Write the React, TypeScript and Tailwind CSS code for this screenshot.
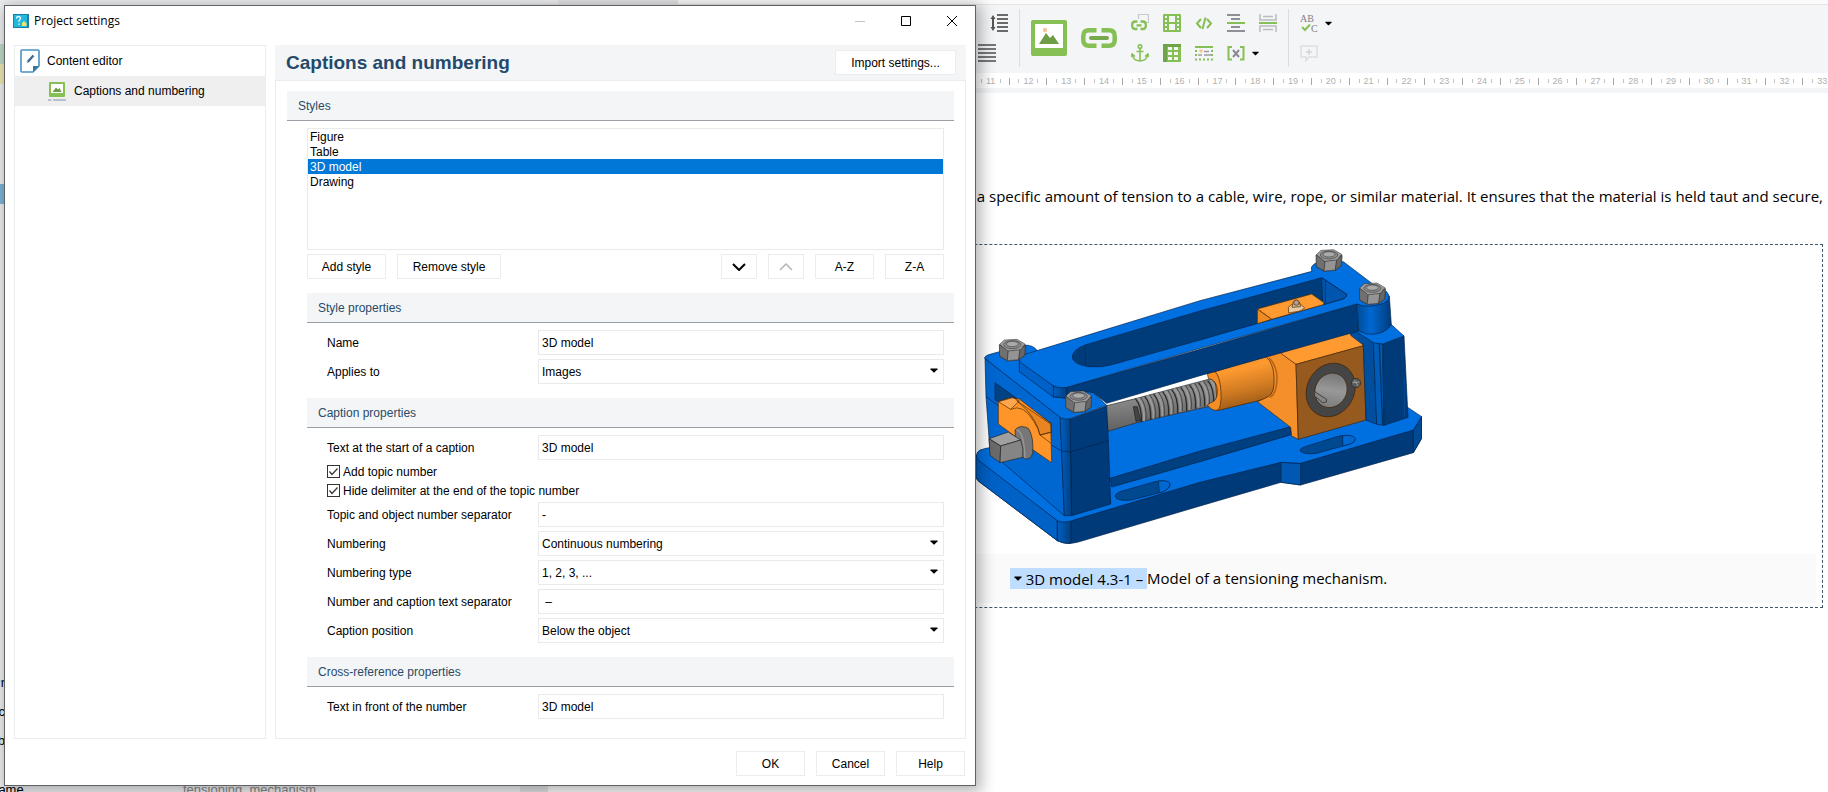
import { useState } from "react"
import type { ReactNode } from "react"

const styles = ["Figure", "Table", "3D model", "Drawing"]

function Caret({ className = "" }: { className?: string }) {
  return (
    <svg viewBox="0 0 8 5" className={`w-2 h-[5px] ${className}`} fill="currentColor">
      <path d="M0.500 0.500h7v0.800L4.400 4.500h-0.800L0.500 1.300z" />
    </svg>
  )
}

function Nut({ x, y }: { x: number; y: number }) {
  return (
    <g transform={`translate(${x} ${y})`} stroke="#2c2c2c" strokeWidth="1.5" strokeLinejoin="round">
      <path d="M-38 -16 L-38 14 L-35 22 L-14 33 L18 30 L37 17 L39 -15 Z" fill="#7a7a7a" />
      <path d="M-39 -16 L-38 18 L-15 31 L-12 2 Z" fill="#707070" />
      <path d="M-12 2 L-15 32 L19 29 L23 -2 Z" fill="#949494" />
      <path d="M23 -2 L19 29 L37 16 L39 -15 Z" fill="#666666" />
      <path d="M-38 -17 L-24 -30 L14 -32 L38 -18 L24 -1 L-13 3 Z" fill="#9e9e9e" />
      <ellipse cx="0" cy="-16" rx="26" ry="12" fill="#8c8c8c" />
      <ellipse cx="0" cy="-18" rx="18" ry="8" fill="#aaaaaa" />
    </g>
  )
}

function TensioningMechanism() {
  const threads = [508, 536, 563, 590, 617, 644, 671, 698, 725]
  return (
    <svg viewBox="18 45 1338 927" className="block w-[446px] h-[309px]" role="img" aria-label="Model of a tensioning mechanism">
      <defs>
        <linearGradient id="shaft" x1="0" y1="0" x2="0.25" y2="1">
          <stop offset="0" stopColor="#4c4c4c" />
          <stop offset="0.4" stopColor="#8c8c8c" />
          <stop offset="1" stopColor="#5c5c5c" />
        </linearGradient>
        <linearGradient id="sleeve" x1="0" y1="0" x2="0.25" y2="1">
          <stop offset="0" stopColor="#d87a18" />
          <stop offset="0.35" stopColor="#ff9a30" />
          <stop offset="0.7" stopColor="#d07b22" />
          <stop offset="1" stopColor="#9c5a16" />
        </linearGradient>
        <linearGradient id="post" x1="0" y1="0" x2="1" y2="0">
          <stop offset="0" stopColor="#004a94" />
          <stop offset="0.4" stopColor="#0068d2" />
          <stop offset="1" stopColor="#003c7a" />
        </linearGradient>
        <linearGradient id="corner" x1="0" y1="0" x2="1" y2="0">
          <stop offset="0" stopColor="#0060c2" />
          <stop offset="1" stopColor="#003f80" />
        </linearGradient>
        <linearGradient id="bore" x1="0" y1="0" x2="0.3" y2="1">
          <stop offset="0" stopColor="#6e6e6e" />
          <stop offset="0.6" stopColor="#989898" />
          <stop offset="1" stopColor="#808080" />
        </linearGradient>
      </defs>

      {/* base plate */}
      <g stroke="#00234a" strokeWidth="2" strokeLinejoin="round">
        <path d="M18 680 L18 742 Q20 750 30 757 L262 932 Q290 946 325 936 L690 828 L933 757 L992 765 L1330 668 L1355 625 L1355 560 L1100 600 L300 800 Z" fill="#003a78" />
        <path d="M18 675 L18 742 Q20 750 30 757 L262 932 L262 872 Z" fill="#0061c6" />
        <path d="M262 870 L262 932 Q280 942 303 940 L303 872 Z" fill="url(#corner)" />
        <path d="M933 697 L992 700 L992 765 L933 757 Z" fill="#0058b2" />
        <path d="M1330 600 L1355 560 L1355 625 L1330 668 Z" fill="#004a94" />
        <path d="M48 655 L414 590 L880 490 L1200 545 L1310 530 L1355 560 L1330 600 L992 700 L933 697 L690 757 L318 868 Q285 882 262 872 L24 690 Q12 672 30 660 Z" fill="#006fe0" />
        <path d="M420 745 L690 663 L962 590 L964 614 L690 695 L425 771 Z" fill="#003f80" />
        <path d="M450 785 L555 755 Q590 748 600 762 Q600 775 580 785 L485 810 Q445 815 435 800 Q434 792 450 785 Z" fill="#004890" />
        <path d="M565 753 Q600 750 600 762 Q600 775 580 785 L568 788 Z" fill="#0068d2" />
        <path d="M1005 650 L1100 620 Q1140 610 1155 625 Q1158 635 1140 642 L1040 670 Q1000 675 990 662 Q989 655 1005 650 Z" fill="#004890" />
        <path d="M1118 617 Q1150 613 1155 625 Q1158 635 1140 642 L1118 648 Z" fill="#0068d2" />
      </g>

      {/* threaded shaft */}
      <path d="M406 528 L500 505 L745 440 L750 522 L500 578 L414 604 Z" fill="url(#shaft)" stroke="#2a2a2a" strokeWidth="2" />
      {threads.map((x) => (
        <g key={x} transform={`translate(${x} ${538 - (x - 508) * 0.25})`} fill="none">
          <path d="M-12 -32 Q8 -10 6 39" stroke="#2b2b2b" strokeWidth="4" />
          <path d="M-4 -35 Q17 -10 14 35" stroke="#9a9a9a" strokeWidth="6" />
          <path d="M3 -37 Q24 -10 20 33" stroke="#474747" strokeWidth="3" />
        </g>
      ))}
      <path d="M490 530 L502 530 L512 572 L498 574 Z" fill="#444" stroke="#1f1f1f" strokeWidth="2" />

      {/* sliding block and sleeve */}
      <g stroke="#3f2205" strokeWidth="2" strokeLinejoin="round">
        <path d="M735 425 L895 375 L935 365 L915 500 L742 542 Z" fill="url(#sleeve)" />
        <path d="M735 425 L712 430 L715 445 Q740 450 742 480 Q743 515 722 518 L712 525 Q728 545 742 540 Q755 535 753 485 Q750 438 735 425 Z" fill="#f58c24" />
        <path d="M888 380 L935 365 L978 403 L985 628 L965 618 L962 592 L862 515 L895 500 Q915 490 912 440 Q910 400 888 380 Z" fill="#f58f2a" />
        <path d="M898 384 Q922 410 921 450 Q919 492 900 502" fill="none" stroke="#b56515" strokeWidth="5" />
        <path d="M935 372 L930 355 L1140 295 L1182 347 L978 403 Z" fill="#ff9a30" />
        <path d="M978 403 L1180 347 L1188 570 L985 628 Z" fill="#965a1e" />
        <ellipse cx="1082" cy="480" rx="71" ry="83" transform="rotate(28 1082 480)" fill="#454545" />
        <ellipse cx="1083" cy="481" rx="47" ry="53" transform="rotate(28 1083 481)" fill="url(#bore)" />
        <path d="M1034 485 L1070 508 L1069 516 L1058 518 L1036 500" fill="#858585" stroke="#222" />
        <circle cx="1158" cy="459" r="14" fill="#5c5c5c" stroke="#222" />
        <path d="M1152 450 L1165 468 M1148 458 L1168 456" stroke="#bbb" />
      </g>

      {/* right end block */}
      <g stroke="#00234a" strokeWidth="2" strokeLinejoin="round">
        <path d="M1140 295 L1210 325 L1220 583 L1188 570 L1180 345 L1142 316 Z" fill="#004e9e" />
        <path d="M1210 335 L1238 342 L1242 586 L1220 583 Z" fill="#005cb8" />
        <path d="M1238 342 L1302 318 L1314 562 L1242 586 Z" fill="#003a78" />
        <path d="M1228 342 L1238 586" stroke="#003468" strokeWidth="4" />
        <path d="M1155 302 L1262 282 L1302 318 L1238 342 L1210 338 Z" fill="#006fe0" />
        <path d="M1303 440 L1303 560" stroke="#00509f" strokeWidth="3" />
      </g>

      {/* left end block */}
      <g stroke="#00234a" strokeWidth="2" strokeLinejoin="round">
        <path d="M45 385 L48 500 L60 665 L283 857 L272 562 Z" fill="#0066d0" />
        <path d="M300 567 L410 528 L415 632 L422 822 L305 857 Z" fill="#003a78" />
        <path d="M270 560 L300 567 L305 857 L283 857 Z" fill="url(#corner)" />
        <path d="M44 385 Q43 378 60 373 L160 345 Q190 345 200 360 L260 470 L370 488 L410 526 L300 566 Q280 570 268 560 Z" fill="#006fe0" />
        <path d="M48 500 L86 528 M245 645 L275 663 L300 666 L415 632" fill="none" />
        <path d="M75 458 L243 580 L243 612 L150 545 L75 510 Z" fill="#004385" />
      </g>
      <g stroke="#4a2806" strokeWidth="2" strokeLinejoin="round">
        <path d="M85 515 L120 503 L148 507 L242 580 L245 698 L190 660 L85 582 Z" fill="#ff9428" />
        <path d="M85 515 L128 503 L148 513 L122 538 Z" fill="#ffa64c" />
        <path d="M140 512 L242 582 L243 607 L210 615 Q200 570 165 535 Z" fill="#e88520" />
        <path d="M122 538 Q160 520 192 575 Q205 595 210 615 L243 640 M210 615 L243 606" fill="none" />
      </g>
      <g stroke="#232323" strokeWidth="2" strokeLinejoin="round">
        <path d="M135 600 Q150 582 175 595 Q192 620 188 670 Q182 690 165 686 L140 670 Z" fill="#777" />
        <path d="M140 600 Q162 605 165 685" fill="none" stroke="#999" strokeWidth="4" />
        <path d="M57 626 L115 606 L152 630 L92 648 Z" fill="#a0a0a0" />
        <path d="M57 626 L92 648 L90 698 L60 676 Z" fill="#6a6a6a" />
        <path d="M92 648 L152 630 Q162 655 158 682 L90 698 Z" fill="#858585" />
      </g>

      {/* top frame */}
      <g stroke="#00234a" strokeWidth="2" strokeLinejoin="round">
        <path d="M250 468 L290 472 L690 358 L1160 222 L1166 303 L690 437 L410 520 L370 488 L330 482 L290 505 L250 500 Z" fill="#003c7c" />
        <path d="M148 385 L252 468 L252 502 L148 425 Z" fill="#0062c8" />
        <path d="M250 468 L290 474 L290 505 L250 500 Z" fill="url(#corner)" />
        <path d="M1160 222 L1258 198 L1264 285 Q1240 318 1190 312 L1166 303 Z" fill="url(#post)" />
        <path d="M155 376 L690 212 L1026 124 Q1018 108 1040 98 L1120 95 L1212 165 L1250 185 Q1268 205 1240 220 Q1195 236 1160 222 L690 355 L290 472 Q262 476 248 466 L150 396 Q144 384 155 376 Z" fill="#006fe0" />
        <path d="M345 345 L690 243 L1055 143 L1130 193 Q1130 204 1115 208 L690 330 L430 403 Q395 414 355 410 Q305 402 307 378 Q312 357 345 345 Z" fill="#003c7a" />
        <path d="M1055 143 L1130 193 Q1130 204 1115 208 L1058 224 Z" fill="#0056ae" />
        <path d="M345 345 L347 408 M1066 150 L1066 218" fill="none" stroke="#002a56" />
      </g>
      <g stroke="#4a2806" strokeWidth="2" strokeLinejoin="round">
        <path d="M862 237 L1025 192 L1062 218 L1060 224 L905 268 Z" fill="#ff9a30" />
        <path d="M862 237 L905 268 L862 281 Z" fill="#f08a24" />
        <path d="M955 232 L966 223 L992 223 L1004 234 L990 243 L956 249 Z" fill="#e8c9a0" />
        <path d="M966 232 L970 216 L978 210 L988 216 L992 230 Z" fill="#d8b590" />
        <circle cx="979" cy="218" r="8" fill="#b0a090" />
      </g>

      <Nut x={127} y={360} />
      <Nut x={326} y={515} />
      <Nut x={1077} y={91} />
      <Nut x={1207} y={191} />
    </svg>
  )
}

function Ruler() {
  const marks = Array.from({ length: 35 }, (_, i) => i)
  return (
    <svg className="block w-full h-[15px] bg-white" aria-hidden="true">
      {marks.map((n) => {
        const x = 26.8 + n * 37.8
        return (
          <g key={n}>
            <text x={x} y="11" textAnchor="middle" fontSize="9" fill="#b0b0b0">
              {n}
            </text>
            <path d={`M${Math.round(x - 10)}.5 6v4M${Math.round(x + 9)}.5 6v4`} stroke="#c4c4c4" />
            <path d={`M${Math.round(x + 18)}.5 5v7`} stroke="#a8a8a8" />
          </g>
        )
      })}
    </svg>
  )
}

function ToolButton({ label, children }: { label: string; children: ReactNode }) {
  return (
    <button type="button" aria-label={label} className="flex items-center gap-[7px] w-8 h-[18px] text-black">
      {children}
    </button>
  )
}

function Icon({ children }: { children: ReactNode }) {
  return (
    <svg viewBox="0 0 18 18" className="w-[18px] h-[18px] shrink-0" fill="none" strokeWidth="2">
      {children}
    </svg>
  )
}

const GREEN = "#86bf54"

function Toolbar() {
  return (
    <div className="flex items-center h-[69px] pb-[2px] pl-[430px] border-t border-[#e3e4e6] bg-[#f4f5f7]">
      <div className="flex flex-col gap-3 w-[41px]">
        <button type="button" aria-label="Line spacing" className="ml-3 h-[18px]">
          <Icon>
            <path d="M7 1h11M7 5h11M7 9h11M7 13h11M7 17h11" stroke="#6b6b6b" />
            <path d="M3 3v12" stroke="#555" />
            <path d="M0.500 5L3 1L5.500 5zM0.500 13L3 17L5.500 13z" fill="#555" />
          </Icon>
        </button>
        <button type="button" aria-label="Justify" className="h-[18px]">
          <Icon>
            <path d="M0 1h18M0 5h18M0 9h18M0 13h18M0 17h18" stroke="#777" />
          </Icon>
        </button>
      </div>
      <div className="w-px h-[58px] bg-[#dcdde0]"></div>
      <div className="flex items-center gap-[14px] ml-[11px]">
        <button type="button" aria-label="Insert image">
          <svg viewBox="0 0 36 36" className="w-9 h-9">
            <rect width="36" height="36" rx="2" fill={GREEN} />
            <rect x="4" y="4" width="28" height="24" fill="#fff" />
            <path d="M8 24L15 13L19 18L22 15L28 24z" fill="#6f9d45" />
            <circle cx="14" cy="10" r="2.200" fill="#f6c795" />
          </svg>
        </button>
        <button type="button" aria-label="Insert link">
          <svg viewBox="0 0 36 20" className="w-9 h-5" fill="none" stroke={GREEN} strokeWidth="4.500">
            <path d="M15.500 2.300H8Q2.300 2.300 2.300 8V12Q2.300 17.700 8 17.700H15.500M20.500 2.300H28Q33.700 2.300 33.700 8V12Q33.700 17.700 28 17.700H20.500" />
            <path d="M10 10H26" stroke="#76a94b" strokeLinecap="round" strokeWidth="4" />
          </svg>
        </button>
      </div>
      <div className="grid grid-cols-5 gap-y-3 ml-[14px]">
        <ToolButton label="Insert topic link">
          <Icon>
            <path d="M7.500 5V0.500H17.500V8.500H15" stroke="#c9c9cc" strokeWidth="1.200" />
            <path d="M6.500 15H4.500Q1.200 15 1.200 12V10.500Q1.200 7.500 4.500 7.500H6.500M9.500 7.500H11.500Q14.800 7.500 14.800 10.500V12Q14.800 15 11.500 15H9.500M5.500 11.300H10.500" stroke={GREEN} strokeWidth="2.300" />
          </Icon>
        </ToolButton>
        <ToolButton label="Insert video">
          <Icon>
            <rect width="18" height="18" rx="1" fill={GREEN} />
            <path d="M2 2h2v2H2zM2 6h2v2H2zM2 10h2v2H2zM2 14h2v2H2zM14 2h2v2h-2zM14 6h2v2h-2zM14 10h2v2h-2zM14 14h2v2h-2zM6 2h6v6H6zM6 10h6v6H6z" fill="#f4f5f7" />
          </Icon>
        </ToolButton>
        <ToolButton label="Insert code">
          <Icon>
            <path d="M6 5L2 9.500L6 14M12 5L16 9.500L12 14M10.500 3.500L7.500 15" stroke={GREEN} strokeWidth="2" />
          </Icon>
        </ToolButton>
        <ToolButton label="Insert spacing">
          <Icon>
            <path d="M0 1h13M4 5h9M4 13h9M0 17h18" stroke="#8d9096" />
            <path d="M0 9h18" stroke={GREEN} />
          </Icon>
        </ToolButton>
        <ToolButton label="Insert page break">
          <Icon>
            <path d="M1 0v6h16V0M1 18v-6h16v6" stroke="#b9bbbf" strokeWidth="1.500" />
            <path d="M4 2.500h10M4 15.500h10" stroke="#b9bbbf" strokeWidth="1.500" />
            <path d="M0 9h18" stroke={GREEN} />
          </Icon>
        </ToolButton>
        <ToolButton label="Insert anchor">
          <Icon>
            <circle cx="9" cy="2.500" r="1.800" stroke={GREEN} strokeWidth="1.500" />
            <path d="M9 4.500V17M5.500 7.500h7M1.200 10.500Q2 16.500 9 17Q16 16.500 16.800 10.500M0 13L1.200 10L4 12.500M18 13L16.800 10L14 12.500" stroke={GREEN} strokeWidth="1.600" />
          </Icon>
        </ToolButton>
        <ToolButton label="Insert table">
          <Icon>
            <rect width="18" height="18" rx="1" fill={GREEN} />
            <path d="M0 0h18v3H4v15H0z" fill="#6fa548" />
            <path d="M5 3h4v3H5zM11 3h4v3h-4zM5 8h4v3H5zM11 8h4v3h-4zM5 13h4v3H5zM11 13h4v3h-4z" fill="#f4f5f7" />
          </Icon>
        </ToolButton>
        <ToolButton label="Insert snippet">
          <Icon>
            <path d="M0 3h18" stroke={GREEN} />
            <path d="M0 7h2M0 11h2M16 7h2M16 11h2M0 15.500h18" stroke={GREEN} strokeDasharray="2 2" />
            <path d="M9 7.500h5M9 11h7M3 11h4" stroke="#9a9da3" strokeWidth="1.500" />
            <circle cx="6" cy="7" r="1.800" fill="#f6c795" />
          </Icon>
        </ToolButton>
        <ToolButton label="Insert variable">
          <Icon>
            <path d="M5 3H1.500V15.500H5M13 3h3.500v12.500H13" stroke={GREEN} />
            <path d="M6 6L12 13M12 6L6 13" stroke="#898c92" />
          </Icon>
          <Caret />
        </ToolButton>
      </div>
      <div className="w-px h-[58px] -ml-[3px] bg-[#dcdde0]"></div>
      <div className="flex flex-col gap-3 ml-[11px]">
        <ToolButton label="Spell check">
          <svg viewBox="0 0 18 18" className="w-[18px] h-[18px] shrink-0 overflow-visible" fill="#7f8288" fontFamily="Liberation Serif, serif" fontSize="10">
            <text x="0" y="8">AB</text>
            <text x="11" y="18">C</text>
            <path d="M2 13L5 16L10 10.500" fill="none" stroke={GREEN} strokeWidth="2" />
          </svg>
          <Caret />
        </ToolButton>
        <ToolButton label="Add comment">
          <Icon>
            <path d="M1 2h16v11H9L6 16.500V13H1z" stroke="#dddee0" strokeWidth="1.500" />
            <path d="M9 5v6M6 8h6" stroke="#d3d4d6" strokeWidth="1.500" />
          </Icon>
        </ToolButton>
      </div>
    </div>
  )
}

function GroupTitle({ children }: { children: ReactNode }) {
  return (
    <h2 className="flex items-center h-[30px] px-[11px] border-b border-[#9a9ea5] bg-[#f4f5f7] text-[#2a4a66]">
      {children}
    </h2>
  )
}

function Button({ className, disabled, label, children }: { className: string; disabled?: boolean; label?: string; children: ReactNode }) {
  return (
    <button
      type="button"
      disabled={disabled}
      aria-label={label}
      className={`flex items-center justify-center h-[25px] border border-[#ececee] bg-white disabled:text-[#b5b5b5] hover:bg-[#f4f5f7] ${className}`}
    >
      {children}
    </button>
  )
}

function TextRow({ id, label, value }: { id: string; label: string; value: string }) {
  return (
    <div className="flex items-center pl-5 pr-[10px]">
      <label htmlFor={id} className="w-[211px] shrink-0">{label}</label>
      <input id={id} type="text" defaultValue={value} className="flex-1 min-w-0 h-[25px] px-[3px] border border-[#e9eaec] bg-white" />
    </div>
  )
}

function SelectRow({ id, label, value }: { id: string; label: string; value: string }) {
  return (
    <div className="flex items-center pl-5 pr-[10px]">
      <label htmlFor={id} className="w-[211px] shrink-0">{label}</label>
      <div className="relative flex-1 min-w-0">
        <select id={id} className="block w-full h-[25px] pl-[3px] border border-[#e9eaec] bg-white appearance-none">
          <option>{value}</option>
        </select>
        <Caret className="absolute right-[6px] top-[9px] pointer-events-none" />
      </div>
    </div>
  )
}

function CheckRow({ id, label }: { id: string; label: string }) {
  return (
    <div className="flex items-center gap-[3px] h-[19px] pl-5">
      <span className="relative block w-[13px] h-[13px]">
        <input id={id} type="checkbox" defaultChecked className="peer block w-[13px] h-[13px] border border-[#333] bg-white appearance-none" />
        <svg viewBox="0 0 13 13" className="absolute inset-0 hidden peer-checked:block pointer-events-none" fill="none" stroke="#333" strokeWidth="1.200">
          <path d="M2.500 6.500L5 9.500L10.500 3.500" />
        </svg>
      </span>
      <label htmlFor={id}>{label}</label>
    </div>
  )
}

function ProjectSettings() {
  const [selected, setSelected] = useState("3D model")

  return (
    <div
      role="dialog"
      aria-label="Project settings"
      className="absolute left-1 top-[5px] flex flex-col w-[972px] border border-[#5f6163] bg-white shadow-[2px_3px_14px_3px_rgba(0,0,0,0.3)] text-xs text-black"
    >
      <div className="flex items-center h-[39px] pl-2 pb-[10px]">
        <svg viewBox="0 0 16 14" className="w-4 h-[14px]">
          <rect width="16" height="14" fill="#1f7fa8" />
          <rect x="1" y="1" width="13" height="12" fill="#22b8dc" />
          <path d="M3.500 4.500Q3.500 2.500 5.500 2.500Q7.500 2.500 7.500 4.500Q7.500 5.500 6 6.500V8M6 9.500V11" fill="none" stroke="#e8fbff" strokeWidth="1.300" />
          <path d="M9 12V9L11 7L13.500 9.500V12z" fill="#f2e36a" />
        </svg>
        <span className="flex-1 ml-[5px] font-['Open_Sans',sans-serif]">Project settings</span>
        <button type="button" aria-label="Minimize" disabled className="flex justify-center w-[46px]">
          <svg viewBox="0 0 10 10" className="w-[10px] h-[10px]"><path d="M0 5.500h10" stroke="#c4c4c4" /></svg>
        </button>
        <button type="button" aria-label="Maximize" className="flex justify-center w-[46px]">
          <svg viewBox="0 0 10 10" className="w-[10px] h-[10px]"><path d="M0.500 0.500h9v9h-9z" fill="none" stroke="#000" /></svg>
        </button>
        <button type="button" aria-label="Close" className="flex justify-center w-[46px]">
          <svg viewBox="0 0 10 10" className="w-[10px] h-[10px]"><path d="M0 0L10 10M10 0L0 10" stroke="#000" /></svg>
        </button>
      </div>

      <div className="flex gap-[9px] pl-[9px] pr-[9px]">
        <nav className="w-[252px] shrink-0 border border-[#ebecee]">
          <a href="#content-editor" className="flex items-center gap-[7px] h-[30px] pl-[5px]">
            <svg viewBox="0 0 20 24" className="w-5 h-6" fill="none">
              <path d="M1 2Q1 1 2 1H18Q19 1 19 2V17L13 23H2Q1 23 1 22z" stroke="#4a90c4" strokeWidth="1.600" />
              <path d="M13 23V17H19z" fill="#39749f" />
              <path d="M13.500 6.500L8 12.500" stroke="#3c6a96" strokeWidth="2.400" />
              <path d="M8.500 11L6.500 14L9.500 13z" fill="#3c6a96" />
            </svg>
            Content editor
          </a>
          <a href="#captions" className="flex items-center gap-2 h-[30px] pl-[33px] bg-[#efefef]">
            <svg viewBox="0 0 18 20" className="w-[18px] h-5">
              <rect x="1" y="1" width="16" height="15" rx="1" fill={GREEN} />
              <rect x="3" y="3" width="12" height="9" fill="#fff" />
              <path d="M4.500 11L8 6.500L10 8.500L11.500 7L13.500 11z" fill="#6f9d45" />
              <path d="M0 19h3.500M5 19h13" stroke="#7d93ae" strokeWidth="1.200" />
            </svg>
            Captions and numbering
          </a>
        </nav>

        <section className="flex-1 min-w-0 border border-t-0 border-[#ebecee] pb-[19px]">
          <div className="flex items-center justify-between h-9 -mx-px pl-[11px] pr-[10px] border-b border-[#ebecee] bg-[#f4f5f7]">
            <h1 className="text-[19px] font-bold text-[#244a6b]">Captions and numbering</h1>
            <Button className="w-[121px]">Import settings...</Button>
          </div>

          <div className="pl-[11px] pr-[11px] pt-[10px]">
            <GroupTitle>Styles</GroupTitle>
            <div className="pl-5">
              <div className="pr-[10px]">
                <ul role="listbox" aria-label="Styles" className="h-[122px] mt-[7px] border border-[#e9eaec]">
                  {styles.map((style) => (
                    <li
                      key={style}
                      role="option"
                      aria-selected={style === selected}
                      onClick={() => setSelected(style)}
                      className={`h-[15px] pl-[2px] leading-4 ${style === selected ? "bg-[#0078d7] text-white" : ""}`}
                    >
                      {style}
                    </li>
                  ))}
                </ul>
                <div className="flex gap-[11px] mt-1">
                  <Button className="w-[79px]">Add style</Button>
                  <Button className="w-[104px] mr-auto">Remove style</Button>
                  <Button label="Move down" className="w-9">
                    <svg viewBox="0 0 14 8" className="w-[14px] h-2" fill="none" stroke="currentColor" strokeWidth="2"><path d="M1 1L7 7L13 1" /></svg>
                  </Button>
                  <Button label="Move up" disabled className="w-9">
                    <svg viewBox="0 0 14 8" className="w-[14px] h-2" fill="none" stroke="currentColor" strokeWidth="1.500"><path d="M1 7L7 1L13 7" /></svg>
                  </Button>
                  <Button className="w-[59px]">A-Z</Button>
                  <Button className="w-[59px]">Z-A</Button>
                </div>
              </div>

              <div className="flex flex-col gap-1 mt-[14px]">
                <div className="mb-[3px]"><GroupTitle>Style properties</GroupTitle></div>
                <TextRow id="name" label="Name" value="3D model" />
                <SelectRow id="applies" label="Applies to" value="Images" />
              </div>

              <div className="flex flex-col gap-1 mt-[14px]">
                <div className="mb-[3px]"><GroupTitle>Caption properties</GroupTitle></div>
                <TextRow id="start" label="Text at the start of a caption" value="3D model" />
                <div className="-my-[2px]">
                  <CheckRow id="topic-number" label="Add topic number" />
                  <CheckRow id="hide-delimiter" label="Hide delimiter at the end of the topic number" />
                </div>
                <TextRow id="topic-separator" label="Topic and object number separator" value="-" />
                <SelectRow id="numbering" label="Numbering" value="Continuous numbering" />
                <SelectRow id="numbering-type" label="Numbering type" value="1, 2, 3, ..." />
                <TextRow id="text-separator" label="Number and caption text separator" value=" – " />
                <SelectRow id="position" label="Caption position" value="Below the object" />
              </div>

              <div className="flex flex-col gap-1 mt-[14px]">
                <div className="mb-[3px]"><GroupTitle>Cross-reference properties</GroupTitle></div>
                <TextRow id="front" label="Text in front of the number" value="3D model" />
              </div>
            </div>
          </div>
        </section>
      </div>

      <div className="flex justify-end gap-[11px] pt-3 pb-[9px] pr-[10px]">
        <Button className="w-[69px]">OK</Button>
        <Button className="w-[69px]">Cancel</Button>
        <Button className="w-[69px]">Help</Button>
      </div>
    </div>
  )
}

export default function App() {
  return (
    <div className="relative flex flex-col h-screen overflow-hidden bg-white font-['Liberation_Sans',Arial,sans-serif]">
      <div className="flex h-1 shrink-0 bg-[#fbfbfb]">
        <div className="w-[558px] bg-[#f0f1f2]"></div>
        <div className="w-[120px] bg-[#e4e5e7]"></div>
      </div>
      <div className="flex flex-1 min-h-0">
        <aside className="w-[548px] shrink-0 overflow-hidden border-r-[28px] border-[#e4e6e9] bg-[#f4f5f7] text-[13px]">
          <div className="h-10"></div>
          <div className="h-5 bg-[#c4e0cd]"></div>
          <div className="h-5 bg-[#f3f0b8]"></div>
          <div className="h-[100px]"></div>
          <div className="h-5 bg-[#7fbbe0]"></div>
          <div className="h-[464px]"></div>
          <div className="flex flex-col items-end w-[5px] h-[114px] leading-[29px]">
            <div>Pr</div>
            <div>c</div>
            <div>b</div>
          </div>
          <div className="flex -ml-[11px] leading-4 whitespace-nowrap">
            <span className="w-[194px]">Name</span>
            <span className="text-[#8a8a8a]">tensioning_mechanism</span>
          </div>
        </aside>

        <main className="flex-1 min-w-0">
          <Toolbar />
          <Ruler />
          <div className="h-[5px] bg-[#f4f5f7]"></div>
          <article className="pl-[26px] pr-[5px] pt-[91px] font-['Open_Sans',sans-serif] text-[15px] leading-6">
            <p className="flex justify-end whitespace-nowrap">
              apply a specific amount of tension to a cable, wire, rope, or similar material. It ensures that the material is held taut and secure,
            </p>
            <figure className="mt-9 px-[6px] pb-1 border border-dashed border-[#44566a]">
              <div className="flex justify-center">
                <TensioningMechanism />
              </div>
              <figcaption className="flex justify-center h-[49px] pt-[14px] bg-[#fafafa]">
                <span className="flex items-center gap-1 h-[21px] pl-1 bg-[#bfdeff] whitespace-pre">
                  <Caret />
                  {"3D model 4.3-1 – "}
                </span>
                <span className="h-[21px] leading-[21px]">Model of a tensioning mechanism.</span>
              </figcaption>
            </figure>
          </article>
        </main>
      </div>

      <ProjectSettings />
    </div>
  )
}
